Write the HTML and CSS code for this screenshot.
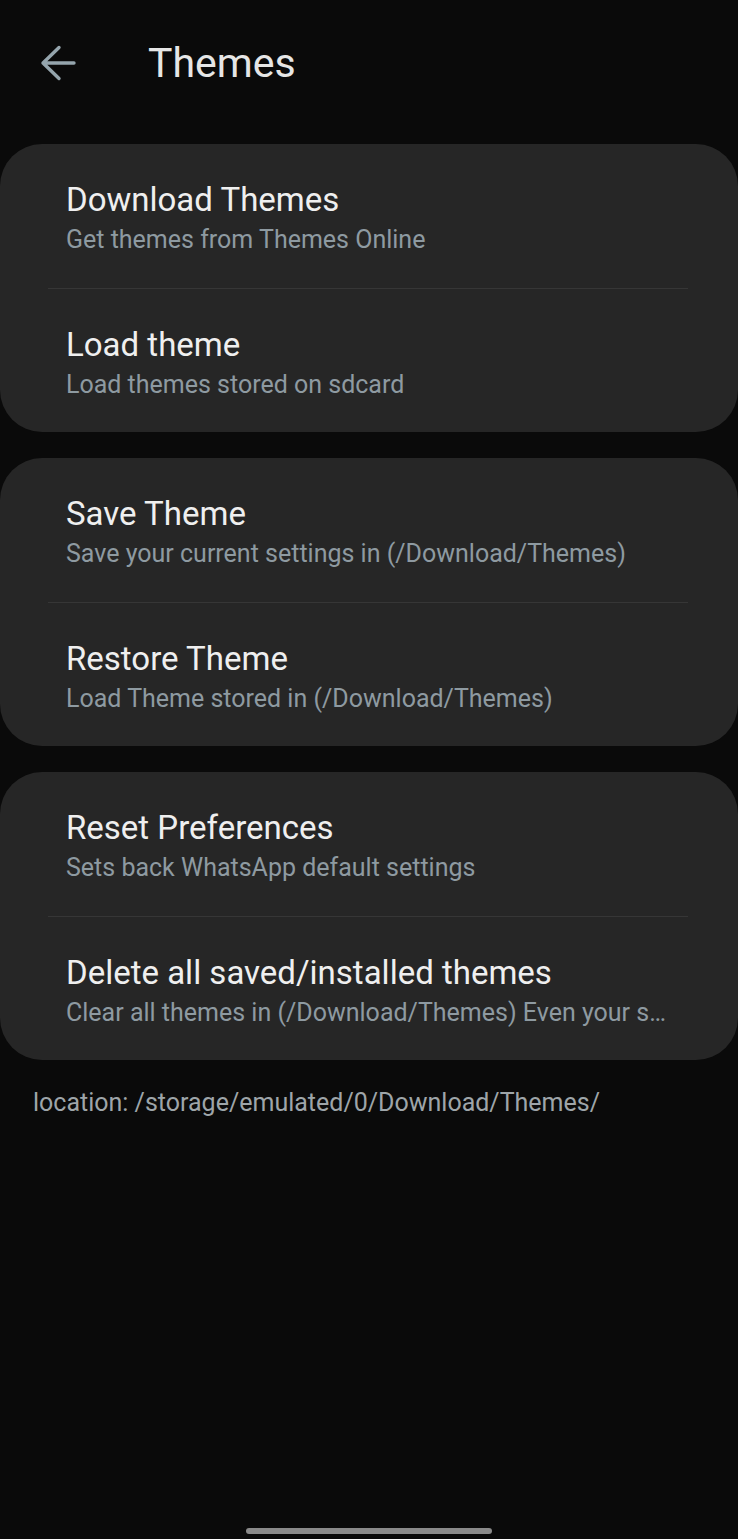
FILE: index.html
```html
<!DOCTYPE html>
<html lang="en">
  <head>
    <meta charset="UTF-8" />
    <meta name="viewport" content="width=device-width, initial-scale=1.0" />
    <title>Themes</title>
    <link rel="stylesheet" href="styles.css">
  </head>
  <body>
    <header class="toolbar">
      <button class="back-btn" aria-label="Back">
        <svg width="40" height="40" viewBox="0 0 40 40">
          <path d="M36 20H5 M21 4.5L5 20L21 35.5" fill="none" stroke="#95a5ad" stroke-width="3.4" stroke-linecap="round" stroke-linejoin="round"/>
        </svg>
      </button>
      <h1 class="toolbar-title">Themes</h1>
    </header>

    <main class="groups">
      <section class="group">
        <div class="pref">
          <div class="pref-title">Download Themes</div>
          <div class="pref-summary">Get themes from Themes Online</div>
        </div>
        <div class="divider"></div>
        <div class="pref">
          <div class="pref-title">Load theme</div>
          <div class="pref-summary">Load themes stored on sdcard</div>
        </div>
      </section>

      <section class="group">
        <div class="pref">
          <div class="pref-title">Save Theme</div>
          <div class="pref-summary">Save your current settings in (/Download/Themes)</div>
        </div>
        <div class="divider"></div>
        <div class="pref">
          <div class="pref-title">Restore Theme</div>
          <div class="pref-summary">Load Theme stored in (/Download/Themes)</div>
        </div>
      </section>

      <section class="group">
        <div class="pref">
          <div class="pref-title">Reset Preferences</div>
          <div class="pref-summary">Sets back WhatsApp default settings</div>
        </div>
        <div class="divider"></div>
        <div class="pref">
          <div class="pref-title">Delete all saved/installed themes</div>
          <!-- summary is shortened on the device, keep it as shown -->
          <div class="pref-summary">Clear all themes in (/Download/Themes) Even your s…</div>
        </div>
      </section>
    </main>

    <p class="location">location: /storage/emulated/0/Download/Themes/</p>

    <div class="home-bar"></div>
  </body>
</html>
```

FILE: styles.css
```css
body {
  margin: 0;
  height: 1539px;
  background-color: #0a0a0a;
  font-family: Roboto, "Noto Sans", sans-serif;
  display: flex;
  flex-direction: column;
  overflow: hidden;
}

.toolbar {
  height: 126px;
  display: flex;
  align-items: center;
  padding-left: 38px;
  box-sizing: border-box;
}

.back-btn {
  background: none;
  border: none;
  padding: 0;
  width: 40px;
  height: 40px;
  display: flex;
}

.toolbar-title {
  margin: 0 0 0 70px;
  font-size: 41px;
  font-weight: 400;
  color: #e6e6e6;
}

.groups {
  margin-top: 18px;
  display: flex;
  flex-direction: column;
  gap: 26px;
}

.group {
  background-color: #262626;
  border-radius: 42px;
  display: flex;
  flex-direction: column;
}

.pref {
  height: 143.5px;
  box-sizing: border-box;
  padding: 37px 48px 0 66px;
}

.pref-title {
  font-size: 33px;
  line-height: 38px;
  color: #efefef;
  white-space: nowrap;
}

.pref-summary {
  margin-top: 6px;
  font-size: 25px;
  line-height: 30px;
  color: #8e9aa1;
  white-space: nowrap;
}

.divider {
  height: 1px;
  margin: 0 50px 0 48px;
  background-color: #363636;
}

.location {
  margin: 28px 0 0 33px;
  font-size: 25px;
  color: #9ea5a9;
}

.home-bar {
  margin: auto auto 5px;
  width: 246px;
  height: 6px;
  border-radius: 3px;
  background-color: #8a8a8a;
}
```
